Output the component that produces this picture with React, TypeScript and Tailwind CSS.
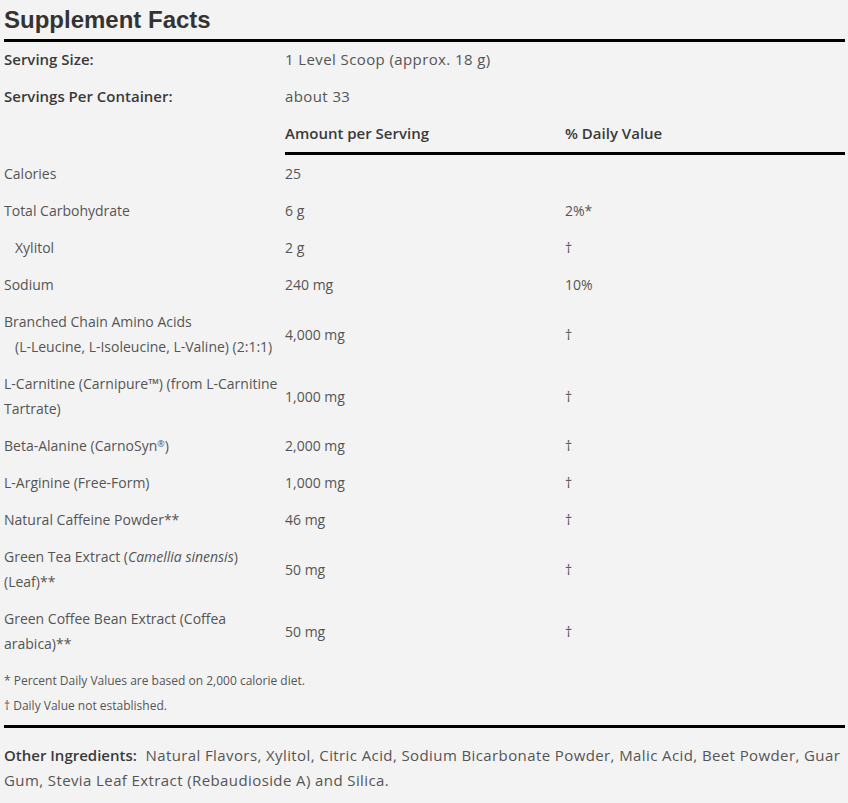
import React from "react";

const body = "font-['Open_Sans',sans-serif]";

type Row = {
  label: React.ReactNode;
  amount: string;
  dv: string;
};

const rows: Row[] = [
  { label: "Calories", amount: "25", dv: "" },
  { label: "Total Carbohydrate", amount: "6 g", dv: "2%*" },
  { label: <span className="pl-[11px]">Xylitol</span>, amount: "2 g", dv: "†" },
  { label: "Sodium", amount: "240 mg", dv: "10%" },
  {
    label: (
      <>
        Branched Chain Amino Acids
        <br />
        <span className="pl-[11px]">(L-Leucine, L-Isoleucine, L-Valine) (2:1:1)</span>
      </>
    ),
    amount: "4,000 mg",
    dv: "†",
  },
  {
    label: "L-Carnitine (Carnipure™) (from L-Carnitine Tartrate)",
    amount: "1,000 mg",
    dv: "†",
  },
  {
    label: (
      <>
        Beta-Alanine (CarnoSyn<sup className="text-[9px]">®</sup>)
      </>
    ),
    amount: "2,000 mg",
    dv: "†",
  },
  { label: "L-Arginine (Free-Form)", amount: "1,000 mg", dv: "†" },
  { label: "Natural Caffeine Powder**", amount: "46 mg", dv: "†" },
  {
    label: (
      <>
        Green Tea Extract (<i>Camellia sinensis</i>) (Leaf)**
      </>
    ),
    amount: "50 mg",
    dv: "†",
  },
  {
    label: "Green Coffee Bean Extract (Coffea arabica)**",
    amount: "50 mg",
    dv: "†",
  },
];

export default function App() {
  return (
    <div className={`min-h-[803px] w-[848px] bg-[#f3f3f3] pl-[4px] pr-[3px] text-[#555] ${body}`}>
      <h1 className="font-['Liberation_Sans',Arial,sans-serif] text-[24px] font-bold leading-[39px] text-[#333]">
        Supplement Facts
      </h1>
      <div className="h-[3px] bg-black" />
      <div className="grid grid-cols-[281px_280px_280px] text-[15px] leading-[25px]">
        <div className="pb-[6px] pt-[5px] font-semibold text-[#3a3a3a]">Serving Size:</div>
        <div className="col-span-2 pb-[6px] pt-[5px] tracking-[0.4px]">1 Level Scoop (approx. 18 g)</div>
        <div className="py-[6px] font-semibold text-[#3a3a3a]">Servings Per Container:</div>
        <div className="col-span-2 py-[6px] tracking-[0.4px]">about 33</div>
        <div className="py-[6px]" />
        <div className="py-[6px] font-semibold text-[#3a3a3a]">Amount per Serving</div>
        <div className="py-[6px] font-semibold text-[#3a3a3a]">% Daily Value</div>
        <div />
        <div className="col-span-2 h-[3px] bg-black" />
        {rows.map((r, i) => (
          <React.Fragment key={i}>
            <div className="flex items-center py-[6px] text-[14px]">
              <div>{r.label}</div>
            </div>
            <div className="flex items-center py-[6px] text-[14px]">{r.amount}</div>
            <div className="flex items-center py-[6px] text-[14px]">{r.dv}</div>
          </React.Fragment>
        ))}
      </div>
      <div className="pb-[7px] pt-[6px] text-[12px] leading-[25px]">
        <div>* Percent Daily Values are based on 2,000 calorie diet.</div>
        <div>† Daily Value not established.</div>
      </div>
      <div className="h-[3px] w-[841px] bg-black" />
      <p className="w-[841px] pt-[15px] text-[15px] leading-[25px] tracking-[0.4px]">
        <span className="font-semibold tracking-normal text-[#3a3a3a]">Other Ingredients:</span>&nbsp; Natural
        Flavors, Xylitol, Citric Acid, Sodium Bicarbonate Powder, Malic Acid, Beet Powder, Guar Gum, Stevia Leaf
        Extract (Rebaudioside A) and Silica.
      </p>
    </div>
  );
}
